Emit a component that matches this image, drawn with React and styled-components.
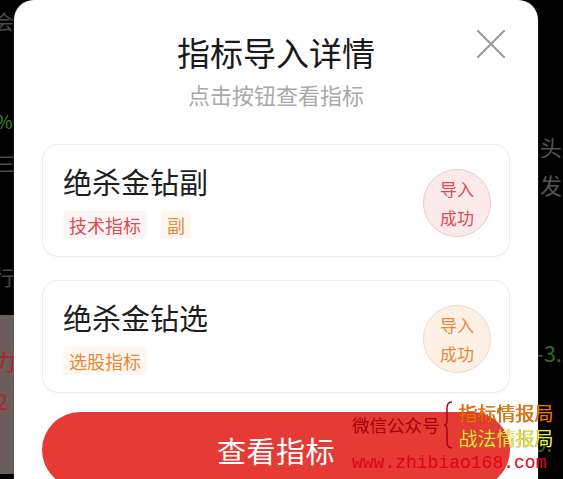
import React from "react";
import styled, { createGlobalStyle } from "styled-components";

const GlobalStyle = createGlobalStyle`
  html, body { margin: 0; padding: 0; background: #000; }
  body { font-family: "Noto Sans CJK SC", "Noto Sans", sans-serif; }
  * { box-sizing: border-box; }
`;

const Screen = styled.div`
  position: relative;
  width: 563px;
  height: 479px;
  overflow: hidden;
  display: flex;
  background: #000;
`;

const SideStrip = styled.div`
  width: ${(p) => p.$w}px;
  flex-shrink: 0;
  display: flex;
  flex-direction: column;
  overflow: hidden;
`;

const Glyph = styled.span`
  display: block;
  margin-top: ${(p) => p.$top || 0}px;
  margin-left: ${(p) => p.$x || 0}px;
  font-size: ${(p) => p.$size || 20}px;
  line-height: ${(p) => (p.$size || 20) + 4}px;
  color: ${(p) => p.$color};
  white-space: nowrap;
`;

const ShadeBlock = styled.div`
  margin-top: ${(p) => p.$top}px;
  height: ${(p) => p.$h}px;
  background: #6b5d59;
  display: flex;
  flex-direction: column;
  overflow: hidden;
`;

const Modal = styled.section`
  width: 524px;
  height: 540px;
  flex-shrink: 0;
  background: #fff;
  border-radius: 20px 20px 0 0;
  box-shadow: 0 0 2px rgba(120, 120, 120, 0.6);
  padding: 32px 28px 0;
  display: flex;
  flex-direction: column;
`;

const Header = styled.header`
  display: grid;
  grid-template-columns: 1fr auto 1fr;
`;

const TitleBlock = styled.div`
  grid-column: 2;
  display: flex;
  flex-direction: column;
  align-items: center;
`;

const Title = styled.h1`
  margin: 0;
  font-size: 33px;
  line-height: 40px;
  font-weight: 400;
  color: #1a1a1a;
`;

const Subtitle = styled.p`
  margin: 9px 0 0;
  font-size: 22px;
  line-height: 27px;
  color: #a9a9a9;
`;

const CloseButton = styled.button`
  grid-column: 3;
  justify-self: end;
  align-self: start;
  margin: -2px 5px 0 0;
  width: 28px;
  height: 28px;
  padding: 0;
  border: none;
  background: none;
  display: flex;
`;

const CardList = styled.div`
  margin-top: 36px;
  display: flex;
  flex-direction: column;
  gap: 23px;
`;

const Card = styled.div`
  border: 1px solid #ececec;
  border-radius: 16px;
  padding: 17px 18px 17px 20px;
  display: flex;
  align-items: center;
  justify-content: space-between;
  box-shadow: 0 1px 3px rgba(0, 0, 0, 0.03);
`;

const CardBody = styled.div`
  display: flex;
  flex-direction: column;
`;

const CardTitle = styled.div`
  font-size: 29px;
  line-height: 38px;
  color: #1e1e1e;
`;

const TagRow = styled.div`
  margin-top: 11px;
  display: flex;
  gap: 14px;
`;

const tones = {
  red: { bg: "#fdf5f5", fg: "#dc4c50", border: "#efc7ca", badge: "#fce9ea" },
  orange: { bg: "#fef7f0", fg: "#e58a3c", border: "#f1d8c0", badge: "#fdf0e5" },
};

const Tag = styled.span`
  height: 28px;
  line-height: 28px;
  padding: 0 6px;
  font-size: 18px;
  border-radius: 4px;
  background: ${(p) => tones[p.$tone].bg};
  color: ${(p) => tones[p.$tone].fg};
`;

const Badge = styled.div`
  width: 68px;
  height: 68px;
  margin-top: 5px;
  border-radius: 50%;
  border: 1px solid ${(p) => tones[p.$tone].border};
  background: ${(p) => tones[p.$tone].badge};
  color: ${(p) => tones[p.$tone].fg};
  display: flex;
  flex-direction: column;
  align-items: center;
  justify-content: center;
  font-size: 17px;
  line-height: 29px;
`;

const PrimaryButton = styled.button`
  margin-top: 19px;
  height: 76px;
  border: none;
  border-radius: 38px;
  background: #e63b35;
  color: #fff;
  font-family: inherit;
  font-size: 29px;
  letter-spacing: 0.5px;
`;

const Watermark = styled.div`
  position: absolute;
  left: 352px;
  top: 400px;
  display: flex;
  flex-direction: column;
  pointer-events: none;
`;

const WatermarkTop = styled.div`
  display: flex;
  align-items: center;
`;

const WmLabel = styled.span`
  font-size: 17.5px;
  line-height: 22px;
  color: #a3000f;
  white-space: nowrap;
`;

const WmStack = styled.div`
  display: flex;
  flex-direction: column;
  margin-left: 6px;
`;

const WmLine = styled.span`
  font-size: 19px;
  line-height: 25px;
  color: ${(p) => p.$color};
  text-shadow: 0 0 0.5px #3a1a00;
  white-space: nowrap;
`;

const WmUrl = styled.span`
  margin-top: 2px;
  font-family: "Liberation Mono", "DejaVu Sans Mono", monospace;
  font-size: 18px;
  line-height: 22px;
  color: #e3001b;
  white-space: nowrap;
`;

const items = [
  { name: "绝杀金钻副", tone: "red", tags: [{ t: "技术指标", tone: "red" }, { t: "副", tone: "orange" }] },
  { name: "绝杀金钻选", tone: "orange", tags: [{ t: "选股指标", tone: "orange" }] },
];

export default function App() {
  return (
    <>
      <GlobalStyle />
      <Screen>
        <SideStrip $w={14}>
          <Glyph $top={10} $x={-6} $color="#4a4a4a">会</Glyph>
          <Glyph $top={76} $x={-4} $size={18} $color="#3d8a2f">%</Glyph>
          <Glyph $top={20} $x={-4} $color="#4a4a4a">三</Glyph>
          <Glyph $top={90} $x={-6} $color="#4a4a4a">行</Glyph>
          <ShadeBlock $top={25} $h={159}>
            <Glyph $top={32} $x={-6} $size={22} $color="#b3242a">力</Glyph>
            <Glyph $top={14} $x={-4} $size={22} $color="#b3242a">2</Glyph>
          </ShadeBlock>
        </SideStrip>

        <Modal>
          <Header>
            <TitleBlock>
              <Title>指标导入详情</Title>
              <Subtitle>点击按钮查看指标</Subtitle>
            </TitleBlock>
            <CloseButton aria-label="关闭">
              <svg width="28" height="28" viewBox="0 0 28 28">
                <path d="M1 1 L27 27 M27 1 L1 27" stroke="#9a9a9a" strokeWidth="2.2" strokeLinecap="round" />
              </svg>
            </CloseButton>
          </Header>

          <CardList>
            {items.map((it) => (
              <Card key={it.name}>
                <CardBody>
                  <CardTitle>{it.name}</CardTitle>
                  <TagRow>
                    {it.tags.map((tg) => (
                      <Tag key={tg.t} $tone={tg.tone}>{tg.t}</Tag>
                    ))}
                  </TagRow>
                </CardBody>
                <Badge $tone={it.tone}>
                  <span>导入</span>
                  <span>成功</span>
                </Badge>
              </Card>
            ))}
          </CardList>

          <PrimaryButton>查看指标</PrimaryButton>
        </Modal>

        <SideStrip $w={25}>
          <Glyph $top={133} $x={2} $size={22} $color="#555">头</Glyph>
          <Glyph $top={12} $x={2} $size={22} $color="#555">发</Glyph>
          <Glyph $top={142} $x={-2} $size={22} $color="#2e6b25">-3.</Glyph>
          <Glyph $top={64} $x={-4} $size={22} $color="#2e6b25">0.</Glyph>
        </SideStrip>

        <Watermark>
          <WatermarkTop>
            <WmLabel>微信公众号</WmLabel>
            <svg width="10" height="50" viewBox="0 0 10 50" style={{ marginLeft: 3 }}>
              <path d="M9 2 Q4 2 4 8 L4 20 Q4 25 1 25 Q4 25 4 30 L4 42 Q4 48 9 48" fill="none" stroke="#a00012" strokeWidth="1.4" />
            </svg>
            <WmStack>
              <WmLine $color="#f07800">指标情报局</WmLine>
              <WmLine $color="#eded3c">战法情报局</WmLine>
            </WmStack>
          </WatermarkTop>
          <WmUrl>www.zhibiao168.com</WmUrl>
        </Watermark>
      </Screen>
    </>
  );
}
